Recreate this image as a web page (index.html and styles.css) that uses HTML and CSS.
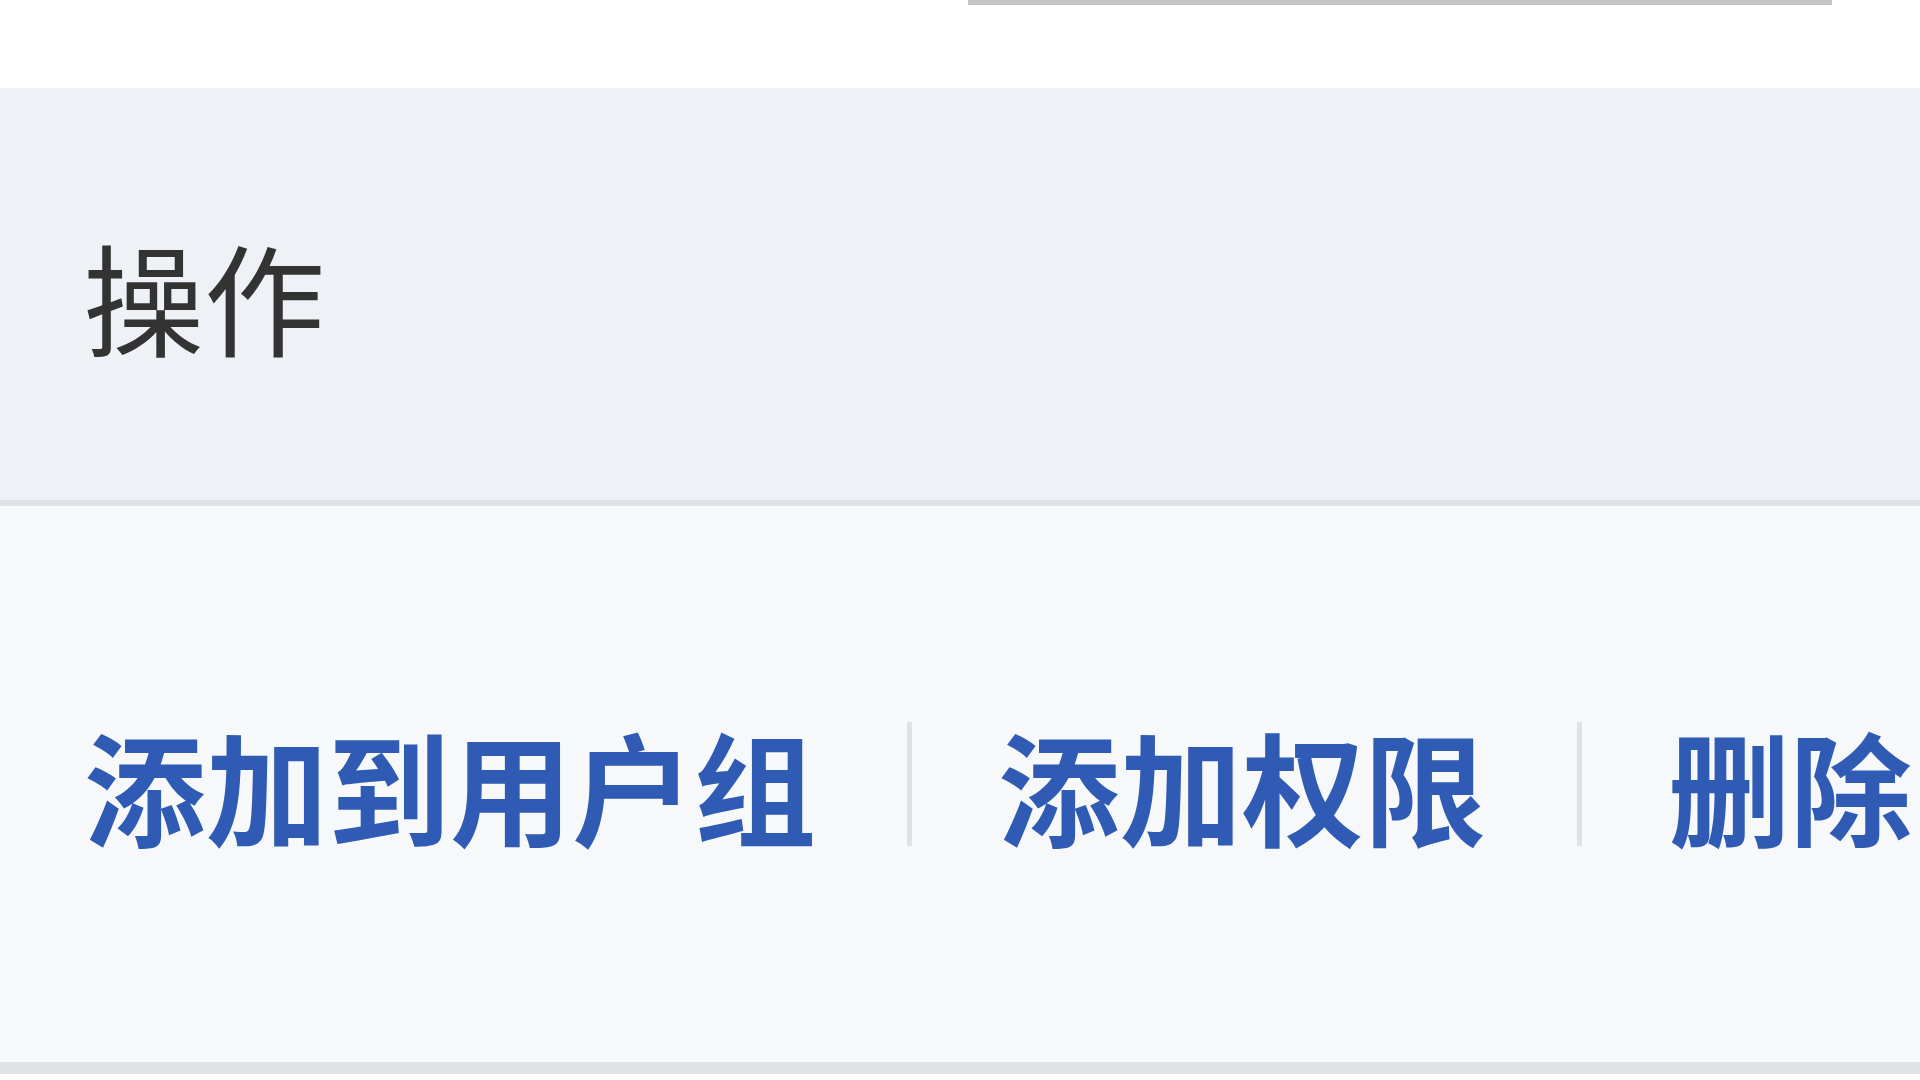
FILE: index.html
```html
<!DOCTYPE html>
<html lang="zh-CN">
<head>
<meta charset="utf-8">
<title>操作</title>
<link rel="stylesheet" href="styles.css">
</head>
<body>
<div class="top">
  <div class="input-edge"></div>
</div>
<div class="table">
  <div class="thead">
    <div class="th">操作</div>
  </div>
  <div class="row">
    <div class="actions">
      <a class="link">添加到用户组</a>
      <span class="sep"></span>
      <a class="link">添加权限</a>
      <span class="sep"></span>
      <a class="link">删除</a>
    </div>
  </div>
</div>
</body>
</html>
```
FILE: styles.css
```css
html, body {
  margin: 0;
  padding: 0;
  background: #ffffff;
  overflow: hidden;
}
body {
  width: 1920px;
  height: 1080px;
  font-family: "Noto Sans CJK SC", "Noto Sans", sans-serif;
}
.top {
  height: 88px;
  padding-left: 968px;
  box-sizing: border-box;
}
.input-edge {
  width: 864px;
  height: 5px;
  background: #c4c4c4;
}
.thead {
  height: 412px;
  background: #eef2f7;
  border-bottom: 6px solid #dfe2e6;
  display: flex;
  align-items: center;
  padding-left: 83px;
}
.th {
  font-size: 121px;
  color: #333333;
  font-weight: 400;
  line-height: 1;
}
.row {
  height: 556px;
  background: #f7f8fa;
  border-bottom: 12px solid #e1e2e5;
  display: flex;
  align-items: center;
  padding-left: 84px;
}
.actions {
  display: flex;
  align-items: center;
  white-space: nowrap;
}
.link {
  font-size: 122px;
  line-height: 1;
  color: #2f5bb5;
  font-weight: 700;
  text-decoration: none;
}
.sep {
  display: block;
  width: 5px;
  height: 124px;
  background: #e0e1e4;
  margin: 0 86px 0 91px;
}
```
